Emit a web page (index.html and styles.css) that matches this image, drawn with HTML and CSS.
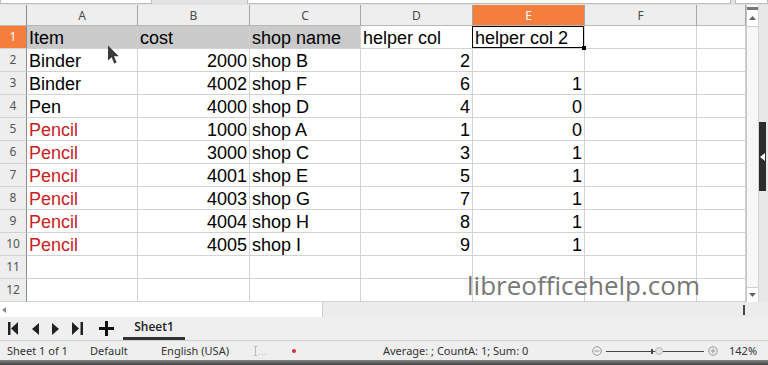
FILE: index.html
```html
<!DOCTYPE html>
<html lang="en">
<head>
    <meta charset="UTF-8">
    <meta name="viewport" content="width=device-width, initial-scale=1.0">
    <title>Sheet1 - LibreOffice Calc</title>
    <link rel="stylesheet" href="styles.css">
</head>
<body>
    <div class="top-strip">
        <div class="top-box name-box"></div>
        <div class="top-box formula-box"></div>
        <div class="top-box extra-box"></div>
    </div>

    <div class="main">
        <div class="sheet">
            <div class="grid">
                <!-- column headers -->
                <div class="corner"></div>
                <div class="ch">A</div>
                <div class="ch">B</div>
                <div class="ch">C</div>
                <div class="ch">D</div>
                <div class="ch act">E</div>
                <div class="ch">F</div>
                <div class="ch"></div>

                <div class="rh act">1</div>
                <div class="c sel">Item</div>
                <div class="c sel">cost</div>
                <div class="c sel">shop name</div>
                <div class="c">helper col</div>
                <div class="c cur">helper col 2</div>
                <div class="c"></div>
                <div class="c"></div>

                <div class="rh">2</div>
                <div class="c">Binder</div>
                <div class="c num">2000</div>
                <div class="c">shop B</div>
                <div class="c num">2</div>
                <div class="c num"></div>
                <div class="c"></div>
                <div class="c"></div>

                <div class="rh">3</div>
                <div class="c">Binder</div>
                <div class="c num">4002</div>
                <div class="c">shop F</div>
                <div class="c num">6</div>
                <div class="c num">1</div>
                <div class="c"></div>
                <div class="c"></div>

                <div class="rh">4</div>
                <div class="c">Pen</div>
                <div class="c num">4000</div>
                <div class="c">shop D</div>
                <div class="c num">4</div>
                <div class="c num">0</div>
                <div class="c"></div>
                <div class="c"></div>

                <div class="rh">5</div>
                <div class="c red">Pencil</div>
                <div class="c num">1000</div>
                <div class="c">shop A</div>
                <div class="c num">1</div>
                <div class="c num">0</div>
                <div class="c"></div>
                <div class="c"></div>

                <div class="rh">6</div>
                <div class="c red">Pencil</div>
                <div class="c num">3000</div>
                <div class="c">shop C</div>
                <div class="c num">3</div>
                <div class="c num">1</div>
                <div class="c"></div>
                <div class="c"></div>

                <div class="rh">7</div>
                <div class="c red">Pencil</div>
                <div class="c num">4001</div>
                <div class="c">shop E</div>
                <div class="c num">5</div>
                <div class="c num">1</div>
                <div class="c"></div>
                <div class="c"></div>

                <div class="rh">8</div>
                <div class="c red">Pencil</div>
                <div class="c num">4003</div>
                <div class="c">shop G</div>
                <div class="c num">7</div>
                <div class="c num">1</div>
                <div class="c"></div>
                <div class="c"></div>

                <div class="rh">9</div>
                <div class="c red">Pencil</div>
                <div class="c num">4004</div>
                <div class="c">shop H</div>
                <div class="c num">8</div>
                <div class="c num">1</div>
                <div class="c"></div>
                <div class="c"></div>

                <div class="rh">10</div>
                <div class="c red">Pencil</div>
                <div class="c num">4005</div>
                <div class="c">shop I</div>
                <div class="c num">9</div>
                <div class="c num">1</div>
                <div class="c"></div>
                <div class="c"></div>

                <div class="rh">11</div>
                <div class="c"></div>
                <div class="c"></div>
                <div class="c"></div>
                <div class="c"></div>
                <div class="c"></div>
                <div class="c"></div>
                <div class="c"></div>

                <div class="rh">12</div>
                <div class="c"></div>
                <div class="c"></div>
                <div class="c"></div>
                <div class="c"></div>
                <div class="c"></div>
                <div class="c"></div>
                <div class="c"></div>
            </div>

            <div class="watermark">libreofficehelp.com</div>

            <svg class="pointer" width="14" height="20" viewBox="0 0 14 20">
                <path d="M1 0.5 L1 15.5 L4.6 12.2 L7.2 18.5 L9.6 17.4 L7 11.3 L11.8 11.3 Z" fill="#3a3a3a"/>
            </svg>
        </div>

        <div class="vscroll">
            <div class="vs-nub"></div>
            <div class="vs-btn">
                <svg width="7" height="4" viewBox="0 0 7 4"><path d="M0 4 L3.5 0 L7 4 Z" fill="#666"/></svg>
            </div>
            <div class="vs-track"></div>
            <div class="vs-btn vs-down">
                <svg width="7" height="4" viewBox="0 0 7 4"><path d="M0 0 L3.5 4 L7 0 Z" fill="#666"/></svg>
            </div>
        </div>

        <div class="side">
            <div class="side-handle">
                <svg width="5" height="8" viewBox="0 0 5 8"><path d="M5 0 L0 4 L5 8 Z" fill="#fff"/></svg>
            </div>
        </div>
    </div>

    <div class="hscroll">
        <div class="hs-left">
            <svg width="4" height="6" viewBox="0 0 4 6"><path d="M4 0 L0 3 L4 6 Z" fill="#888"/></svg>
        </div>
        <div class="hs-tick"></div>
    </div>

    <div class="tabbar">
        <div class="nav">
            <svg width="11" height="13" viewBox="0 0 11 13"><rect x="0" y="0" width="2.5" height="13" fill="#222"/><path d="M10 0 L3 6.5 L10 13 Z" fill="#222"/></svg>
            <svg width="7" height="12" viewBox="0 0 7 12"><path d="M7 0 L0 6 L7 12 Z" fill="#222"/></svg>
            <svg width="7" height="12" viewBox="0 0 7 12"><path d="M0 0 L7 6 L0 12 Z" fill="#222"/></svg>
            <svg width="11" height="13" viewBox="0 0 11 13"><path d="M0 0 L7 6.5 L0 13 Z" fill="#222"/><rect x="8.5" y="0" width="2.5" height="13" fill="#222"/></svg>
            <svg class="plus" width="15" height="15" viewBox="0 0 15 15"><rect x="6" y="0" width="3" height="15" fill="#111"/><rect x="0" y="6" width="15" height="3" fill="#111"/></svg>
        </div>
        <div class="tab">Sheet1</div>
    </div>

    <div class="statusbar">
        <span class="sb-item sb-sheet">Sheet 1 of 1</span>
        <span class="sb-item sb-style">Default</span>
        <span class="sb-item sb-lang">English (USA)</span>
        <span class="sb-item sb-mode">
            <svg width="14" height="10" viewBox="0 0 14 10"><rect x="1" y="0" width="1" height="10" fill="#bbb"/><rect x="0" y="0" width="3" height="1" fill="#bbb"/><rect x="0" y="9" width="3" height="1" fill="#bbb"/><rect x="5" y="8" width="1" height="1" fill="#bbb"/><rect x="8" y="8" width="1" height="1" fill="#bbb"/><rect x="11" y="8" width="1" height="1" fill="#bbb"/></svg>
        </span>
        <span class="sb-item sb-modified"><span class="dot"></span></span>
        <span class="sb-item sb-sum">Average: ; CountA: 1; Sum: 0</span>
        <span class="sb-zoom">
            <svg width="10" height="10" viewBox="0 0 10 10"><circle cx="5" cy="5" r="4.3" fill="none" stroke="#999" stroke-width="1"/><rect x="2.5" y="4.5" width="5" height="1" fill="#999"/></svg>
            <span class="slider">
                <span class="slider-line"></span>
                <span class="slider-tick"></span>
                <span class="slider-knob"></span>
            </span>
            <svg width="10" height="10" viewBox="0 0 10 10"><circle cx="5" cy="5" r="4.3" fill="none" stroke="#999" stroke-width="1"/><rect x="2.5" y="4.5" width="5" height="1" fill="#999"/><rect x="4.5" y="2.5" width="1" height="5" fill="#999"/></svg>
        </span>
        <span class="sb-item sb-pct">142%</span>
    </div>

    <div class="bottom-band"></div>
</body>
</html>
```

FILE: styles.css
```css
body {
    margin: 0;
    width: 768px;
    height: 365px;
    overflow: hidden;
    background-color: #efefef;
    font-family: "Liberation Sans", Arial, sans-serif;
}

/* formula bar remains at the very top */
.top-strip {
    display: flex;
    height: 5px;
    background-color: #e2e2e2;
}

.top-box {
    height: 4px;
    background-color: #fff;
    border: 1px solid #bcbcbc;
    border-top: none;
    box-sizing: border-box;
}

.name-box {
    width: 152px;
}

.formula-box {
    width: 484px;
    margin-left: 95px;
}

.extra-box {
    width: 33px;
    margin-left: 4px;
}

.main {
    display: flex;
    height: 297px;
}

.sheet {
    position: relative;
    width: 746px;
    background-color: #fff;
}

.grid {
    display: grid;
    grid-template-columns: 27px 111px 112px 111px 112px 112px 112px 49px;
    grid-template-rows: 21px;
    grid-auto-rows: 23px;
}

.corner {
    background-color: #eeeeee;
    border-right: 1px solid #8c8c8c;
    border-bottom: 1px solid #b8b8b8;
}

.ch {
    background-color: #eeeeee;
    border-right: 1px solid #a6a6a6;
    border-bottom: 1px solid #b8b8b8;
    box-sizing: border-box;
    font-family: "Noto Sans", "DejaVu Sans", sans-serif;
    font-size: 12px;
    line-height: 21px;
    text-align: center;
    color: #4a4a4a;
}

.rh {
    background-color: #eeeeee;
    border-right: 1px solid #8c8c8c;
    border-bottom: 1px solid #d2d2d2;
    box-sizing: border-box;
    font-family: "Noto Sans", "DejaVu Sans", sans-serif;
    font-size: 12px;
    line-height: 22px;
    text-align: center;
    color: #555;
}

.ch.act,
.rh.act {
    background-color: #f47e3c;
    color: #fff;
}

.c {
    border-right: 1px solid #d2d2d2;
    border-bottom: 1px solid #d2d2d2;
    box-sizing: border-box;
    padding: 1px 2px 0 2px;
    font-size: 18px;
    line-height: 22px;
    white-space: nowrap;
    overflow: hidden;
    color: #000;
}

.num {
    text-align: right;
}

.red {
    color: #c9211e;
}

.sel {
    background-color: #cacaca;
}

/* cell cursor on E1 */
.cur {
    position: relative;
    overflow: visible;
    box-shadow: inset 0 0 0 1px #000;
    margin-left: -1px;
    padding-left: 3px;
}

.cur::after {
    content: "";
    position: absolute;
    right: -2px;
    bottom: -2px;
    width: 4px;
    height: 4px;
    background-color: #000;
}

.watermark {
    position: absolute;
    left: 467px;
    top: 265px;
    font-family: "Open Sans", sans-serif;
    font-size: 26px;
    line-height: 30px;
    color: #777;
}

.pointer {
    position: absolute;
    left: 107px;
    top: 40px;
}

.vscroll {
    display: flex;
    flex-direction: column;
    width: 12px;
    background-color: #f7f7f7;
    border-left: 1px solid #c6c6c6;
}

.vs-nub {
    height: 3px;
    margin-top: 2px;
    background-color: #777;
}

.vs-btn {
    display: flex;
    align-items: center;
    justify-content: center;
    height: 16px;
    background-color: #fff;
    border-bottom: 1px solid #d0d0d0;
}

.vs-track {
    flex: 1;
}

.vs-down {
    height: 14px;
    border-bottom: none;
    border-top: 1px solid #d0d0d0;
}

.side {
    width: 10px;
    background-color: #e8e8e8;
    border-left: 1px solid #d4d4d4;
    box-sizing: border-box;
}

.side-handle {
    display: flex;
    align-items: center;
    justify-content: center;
    width: 7px;
    height: 69px;
    margin-top: 117px;
    background-color: #2c2c2c;
}

.hscroll {
    display: flex;
    height: 15px;
    background-color: #ececec;
}

.hs-left {
    display: flex;
    align-items: center;
    width: 323px;
    padding-left: 2px;
    box-sizing: border-box;
    background-color: #fff;
    border-right: 1px solid #cfcfcf;
}

.hs-tick {
    width: 2px;
    height: 10px;
    margin: 3px 23px 0 auto;
    background-color: #444;
}

.tabbar {
    display: flex;
    align-items: stretch;
    height: 23px;
    background-color: #efefef;
}

.nav {
    display: flex;
    align-items: center;
    gap: 13px;
    padding-left: 8px;
    width: 123px;
    box-sizing: border-box;
}

.nav .plus {
    margin-left: 3px;
}

.tab {
    width: 62px;
    box-sizing: border-box;
    border-bottom: 3px solid #333;
    font-family: "Open Sans", sans-serif;
    font-size: 12px;
    font-weight: 600;
    line-height: 20px;
    text-align: center;
    color: #222;
}

.statusbar {
    display: flex;
    align-items: center;
    height: 20px;
    box-sizing: border-box;
    border-top: 1px solid #cfcfcf;
    padding-left: 7px;
    background-color: #efefef;
    font-family: "Noto Sans", "Open Sans", sans-serif;
    font-size: 11px;
    color: #333;
}

.sb-item {
    display: flex;
    align-items: center;
    white-space: nowrap;
}

.sb-sheet {
    width: 83px;
}

.sb-style {
    width: 71px;
}

.sb-lang {
    width: 93px;
}

.sb-mode {
    width: 37px;
}

.sb-modified {
    width: 92px;
    padding-left: 1px;
    box-sizing: border-box;
}

.dot {
    width: 4px;
    height: 4px;
    border-radius: 50%;
    background-color: #d0313a;
}

.sb-sum {
    width: 209px;
}

.sb-zoom {
    display: flex;
    align-items: center;
    gap: 4px;
    width: 137px;
}

.slider {
    position: relative;
    width: 98px;
    height: 10px;
}

.slider-line {
    position: absolute;
    left: 0;
    right: 0;
    top: 5px;
    height: 1px;
    background-color: #444;
}

.slider-tick {
    position: absolute;
    left: 45px;
    top: 3px;
    width: 2px;
    height: 5px;
    background-color: #444;
}

.slider-knob {
    position: absolute;
    left: 49px;
    top: 1px;
    width: 8px;
    height: 8px;
    box-sizing: border-box;
    border-radius: 50%;
    border: 1px solid #bbb;
    background-color: #e2e2e2;
}

.bottom-band {
    height: 5px;
    background: linear-gradient(#858585, #3e3e3e);
}
```
